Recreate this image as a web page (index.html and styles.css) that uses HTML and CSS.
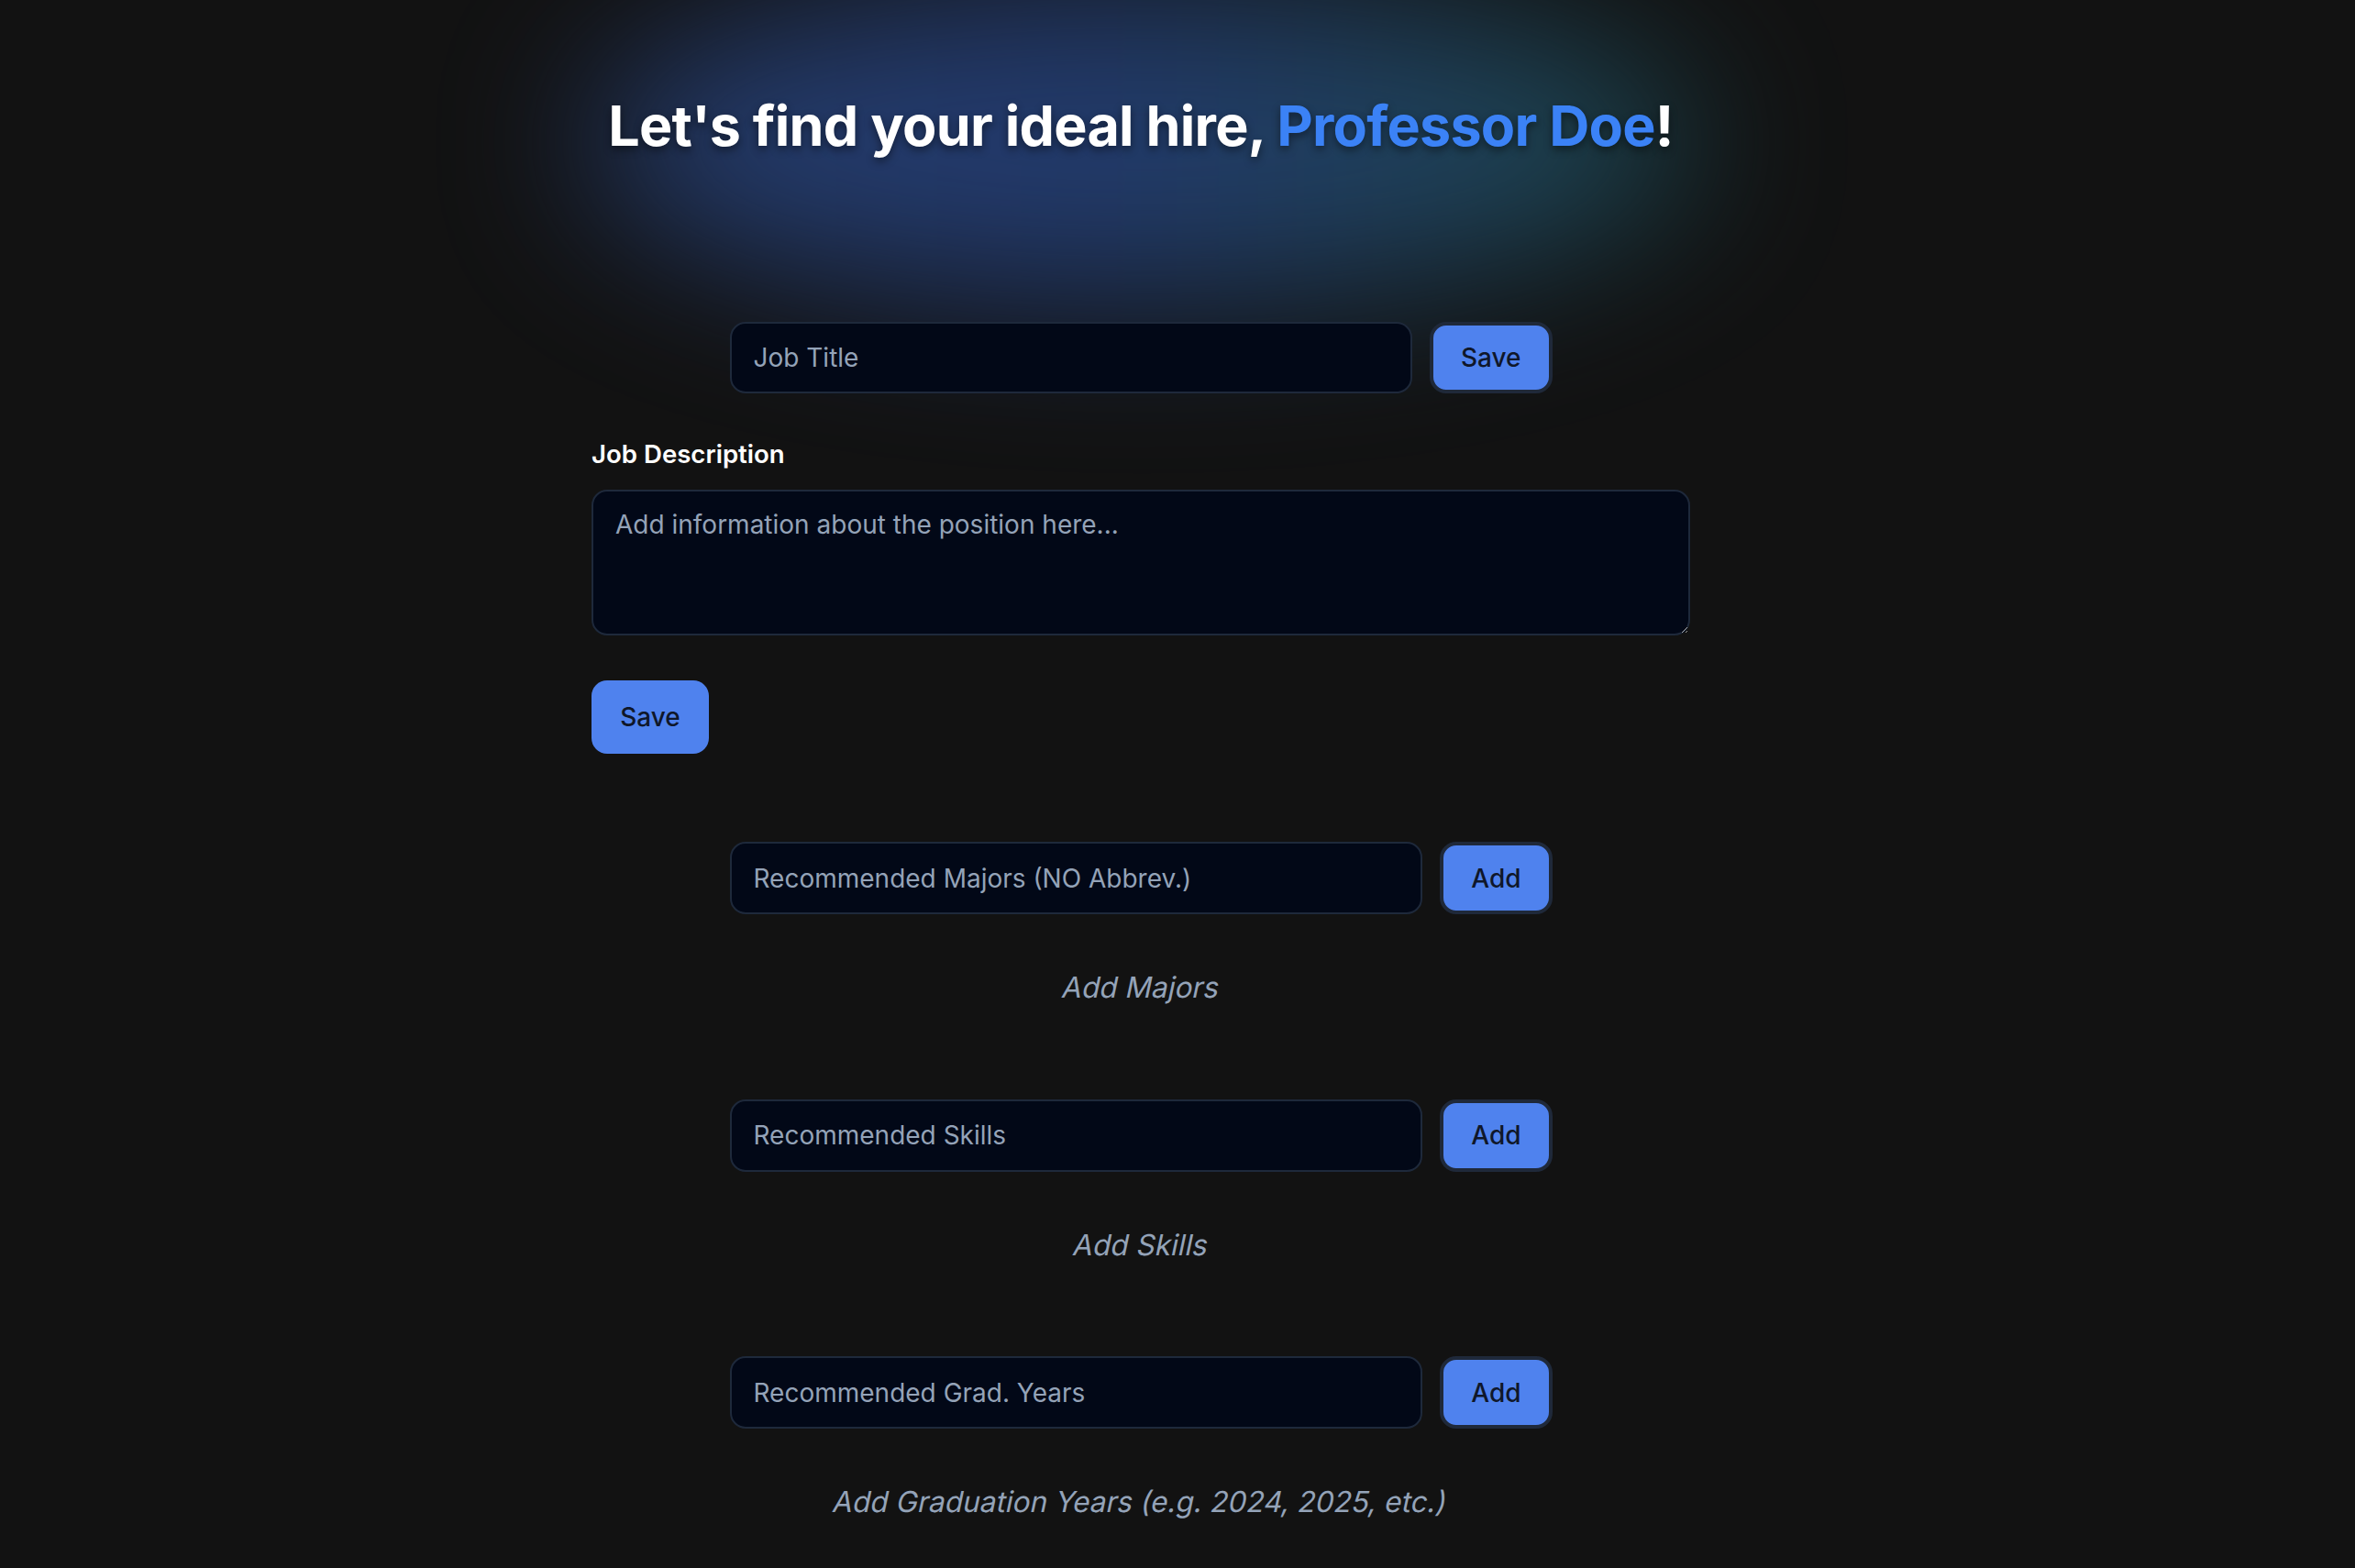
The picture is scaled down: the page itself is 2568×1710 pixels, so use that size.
FILE: index.html
```html
<!DOCTYPE html>
<html lang="en">
<head>
<meta charset="utf-8">
<title>Find your ideal hire</title>
<link rel="stylesheet" href="styles.css">
</head>
<body>
<div class="page">
  <div class="glow"></div>
  <header class="hero">
    <h1 class="title">Let's find your ideal hire, <span class="name">Professor Doe</span>!</h1>
  </header>
  <main class="form">
    <div class="row row-title">
      <input class="field" type="text" placeholder="Job Title">
      <button class="btn btn-ring">Save</button>
    </div>

    <section class="desc">
      <label class="label" for="desc">Job Description</label>
      <textarea id="desc" class="area" placeholder="Add information about the position here..."></textarea>
      <button class="btn btn-plain">Save</button>
    </section>

    <section class="group group-first">
      <div class="row">
        <input class="field" type="text" placeholder="Recommended Majors (NO Abbrev.)">
        <button class="btn btn-ring">Add</button>
      </div>
      <p class="hint"><span class="slant">Add Majors</span></p>
    </section>

    <section class="group">
      <div class="row">
        <input class="field" type="text" placeholder="Recommended Skills">
        <button class="btn btn-ring">Add</button>
      </div>
      <p class="hint"><span class="slant">Add Skills</span></p>
    </section>

    <section class="group">
      <div class="row">
        <input class="field" type="text" placeholder="Recommended Grad. Years">
        <button class="btn btn-ring">Add</button>
      </div>
      <p class="hint"><span class="slant">Add Graduation Years (e.g. 2024, 2025, etc.)</span></p>
    </section>
  </main>
</div>
</body>
</html>
```

FILE: styles.css
```css
* { box-sizing: border-box; }

html, body {
  margin: 0;
  padding: 0;
  background: #121212;
}

body {
  font-family: Inter, "Noto Sans", "Liberation Sans", sans-serif;
  color: #ffffff;
  overflow: hidden;
}

.page {
  position: relative;
  width: 2488px;
  min-height: 1710px;
}

.glow {
  position: absolute;
  left: 640px;
  top: -20px;
  width: 1210px;
  height: 350px;
  border-radius: 50%;
  background: linear-gradient(90deg, #29457f 0%, #25407a 45%, #1e5058 100%);
  filter: blur(85px);
  opacity: 0.85;
  z-index: 0;
}

.hero {
  position: relative;
  z-index: 1;
  padding-top: 100px;
  text-align: center;
}

.title {
  margin: 0;
  font-size: 61px;
  line-height: 74px;
  font-weight: 700;
  letter-spacing: -0.75px;
  color: #ffffff;
  text-shadow: 0 4px 10px rgba(0, 0, 0, 0.45);
}

.name {
  color: #3b82f6;
}

.form {
  position: relative;
  z-index: 1;
  display: flex;
  flex-direction: column;
  align-items: center;
  margin-top: 177px;
}

.row {
  width: 897px;
  height: 79px;
  display: flex;
  gap: 19px;
}

.row-title {
  height: 78px;
}

.field {
  flex: 1;
  min-width: 0;
  height: 100%;
  background: #020817;
  border: 2px solid #1e293b;
  border-radius: 17px;
  padding: 0 24px;
  font-family: inherit;
  font-size: 28px;
  color: #e2e8f0;
  outline: none;
}

.field::placeholder,
.area::placeholder {
  color: #94a3b8;
  opacity: 1;
}

.btn {
  font-family: inherit;
  font-size: 28px;
  font-weight: 500;
  color: #0f172a;
  background: #4f82ee;
  cursor: pointer;
}

.btn-ring {
  height: 100%;
  padding: 0 30px;
  border: 4px solid #1f293a;
  border-radius: 18px;
}

.btn-plain {
  width: 128px;
  height: 80px;
  padding: 0;
  border: none;
  border-radius: 17px;
  margin-top: 49px;
}

.desc {
  width: 1198px;
  display: flex;
  flex-direction: column;
  align-items: flex-start;
  margin-top: 46px;
}

.label {
  font-size: 27.6px;
  line-height: 40px;
  font-weight: 600;
  color: #ffffff;
}

.area {
  width: 100%;
  height: 159px;
  margin-top: 19px;
  background: #020817;
  border: 2px solid #1e293b;
  border-radius: 17px;
  padding: 16px 24px;
  font-family: inherit;
  font-size: 28px;
  line-height: 40px;
  color: #e2e8f0;
  outline: none;
  display: block;
}

.group {
  display: flex;
  flex-direction: column;
  align-items: center;
  margin-top: 100px;
}

.group-first {
  margin-top: 96px;
}

.hint {
  margin: 58px 0 0 0;
  font-size: 31.6px;
  line-height: 43.5px;
  color: #94a3b8;
}

.slant {
  display: inline-block;
  transform: skewX(-12deg);
}
```
